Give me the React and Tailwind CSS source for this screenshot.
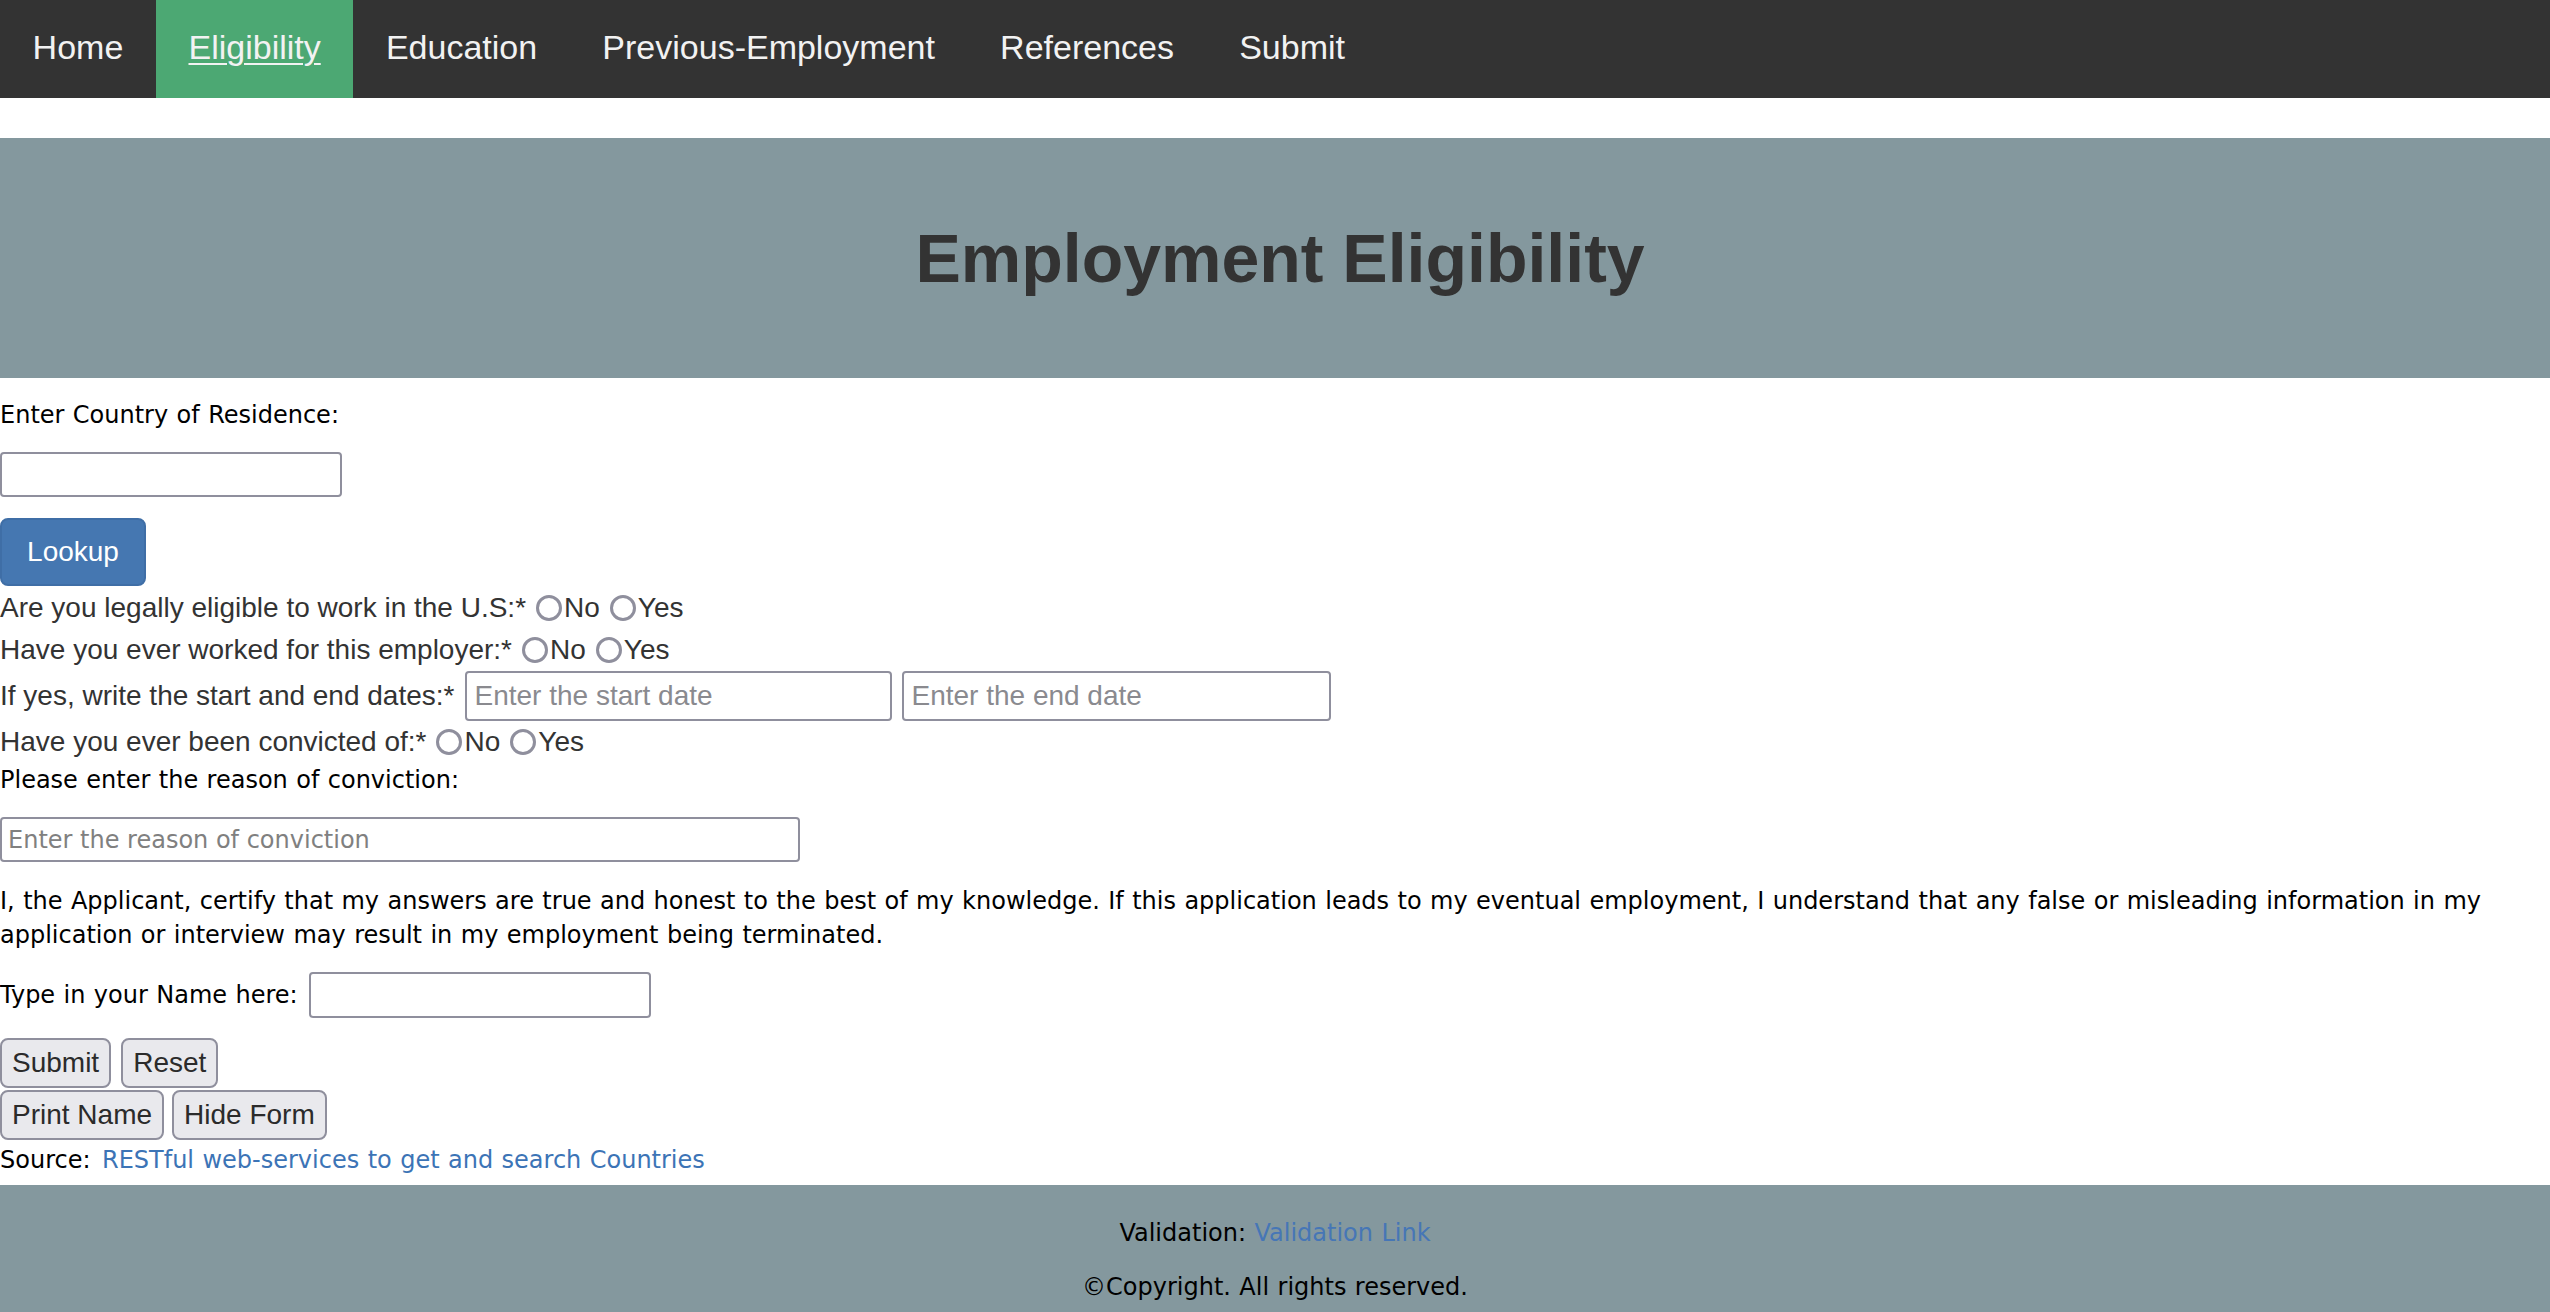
import React from "react";

function Radio({ className = "" }) {
  return (
    <input
      type="radio"
      className={
        "appearance-none w-[26px] h-[26px] rounded-full border-[3px] border-[#8f8f9d] bg-white shrink-0 " +
        className
      }
    />
  );
}

function GrayButton({ children }) {
  return (
    <button className="h-[50px] px-[10px] border-2 border-[#8f8f9d] rounded-[8px] bg-[#e9e9ed] text-[28px] text-[#2b2b2b] font-['Liberation_Sans',Arial,Helvetica,sans-serif] leading-none">
      {children}
    </button>
  );
}

export default function App() {
  const navItems = ["Home", "Eligibility", "Education", "Previous-Employment", "References", "Submit"];
  return (
    <div className="w-full bg-white font-['DejaVu_Sans',Verdana,sans-serif] text-[24px] text-black [word-spacing:0.8px]">
      <nav className="flex h-[98px] bg-[#333333] font-['Liberation_Sans',Arial,Helvetica,sans-serif] [word-spacing:0px]">
        {navItems.map((item) => (
          <a
            key={item}
            href="#"
            className={
              item === "Eligibility"
                ? "flex items-center px-[32.6px] pb-[4px] text-[34px] text-[#f2f2f2] bg-[#4ca873] underline underline-offset-[4px] decoration-[2px]"
                : "flex items-center px-[32.6px] pb-[4px] text-[34px] text-[#f2f2f2]"
            }
          >
            {item}
          </a>
        ))}
      </nav>

      <div className="h-[40px]" />

      <header className="h-[240px] bg-[#84989e] flex items-center justify-center">
        <h1 className="text-[68px] font-bold text-[#333333] font-['Liberation_Sans',Arial,Helvetica,sans-serif] pl-[10px] [word-spacing:0px]">
          Employment Eligibility
        </h1>
      </header>

      <main>
        <div className="mt-[14px] h-[46px] flex items-center">Enter Country of Residence:</div>
        <input
          type="text"
          className="block mt-[14px] h-[45px] w-[342px] border-2 border-[#8f8f9d] rounded-[4px] bg-white"
        />
        <button className="block mt-[21px] h-[68px] w-[146px] bg-[#4577b1] border-2 border-[#3f6ea6] rounded-[8px] text-white text-[28px] font-['Liberation_Sans',Arial,Helvetica,sans-serif]">
          Lookup
        </button>

        <div className="font-['Liberation_Sans',Arial,Helvetica,sans-serif] text-[28px] text-[#333333] [word-spacing:0px]">
          <div className="mt-[1px] h-[42px] flex items-center">
            <span>Are you legally eligible to work in the U.S:*</span>
            <Radio className="ml-[10px] mr-[2px]" />
            <span>No</span>
            <Radio className="ml-[10px] mr-[2px]" />
            <span>Yes</span>
          </div>
          <div className="h-[42px] flex items-center">
            <span>Have you ever worked for this employer:*</span>
            <Radio className="ml-[10px] mr-[2px]" />
            <span>No</span>
            <Radio className="ml-[10px] mr-[2px]" />
            <span>Yes</span>
          </div>
          <div className="h-[50px] flex items-center">
            <span>If yes, write the start and end dates:*</span>
            <input
              type="text"
              placeholder="Enter the start date"
              className="ml-[11px] h-[50px] w-[427px] px-[7px] border-2 border-[#8f8f9d] rounded-[4px] text-[28px] placeholder:text-[#8a8a8f]"
            />
            <input
              type="text"
              placeholder="Enter the end date"
              className="ml-[10px] h-[50px] w-[429px] px-[7px] border-2 border-[#8f8f9d] rounded-[4px] text-[28px] placeholder:text-[#8a8a8f]"
            />
          </div>
          <div className="h-[42px] flex items-center">
            <span>Have you ever been convicted of:*</span>
            <Radio className="ml-[10px] mr-[2px]" />
            <span>No</span>
            <Radio className="ml-[10px] mr-[2px]" />
            <span>Yes</span>
          </div>
        </div>

        <div className="h-[34px] flex items-center">Please enter the reason of conviction:</div>
        <input
          type="text"
          placeholder="Enter the reason of conviction"
          className="block mt-[20px] h-[45px] w-[800px] px-[6px] border-2 border-[#8f8f9d] rounded-[4px] text-[24px] placeholder:text-[#808080]"
        />

        <p className="mt-[22px] leading-[34px] whitespace-nowrap">
          I, the Applicant, certify that my answers are true and honest to the best of my knowledge. If this application leads to my eventual employment, I understand that any false or misleading information in my
          <br />
          application or interview may result in my employment being terminated.
        </p>

        <div className="mt-[20px] h-[46px] flex items-center">
          <span>Type in your Name here:</span>
          <input
            type="text"
            className="ml-[11px] h-[46px] w-[342px] border-2 border-[#8f8f9d] rounded-[4px]"
          />
        </div>

        <div className="mt-[20px] flex gap-[10px]">
          <GrayButton>Submit</GrayButton>
          <GrayButton>Reset</GrayButton>
        </div>
        <div className="mt-[2px] flex gap-[8px]">
          <GrayButton>Print Name</GrayButton>
          <GrayButton>Hide Form</GrayButton>
        </div>

        <div className="h-[40px] flex items-center">
          <span>Source:&nbsp;</span>
          <a href="#" className="ml-[3px] text-[#3c74b6]">RESTful web-services to get and search Countries</a>
        </div>
      </main>

      <footer className="mt-[5px] h-[127px] bg-[#84989e] pt-[31px] text-center">
        <div className="h-[34px] flex items-center justify-center">
          <span>Validation:&nbsp;</span>
          <a href="#" className="text-[#4676b6]">Validation Link</a>
        </div>
        <div className="mt-[20px] h-[34px] flex items-center justify-center">©Copyright. All rights reserved.</div>
      </footer>
    </div>
  );
}
